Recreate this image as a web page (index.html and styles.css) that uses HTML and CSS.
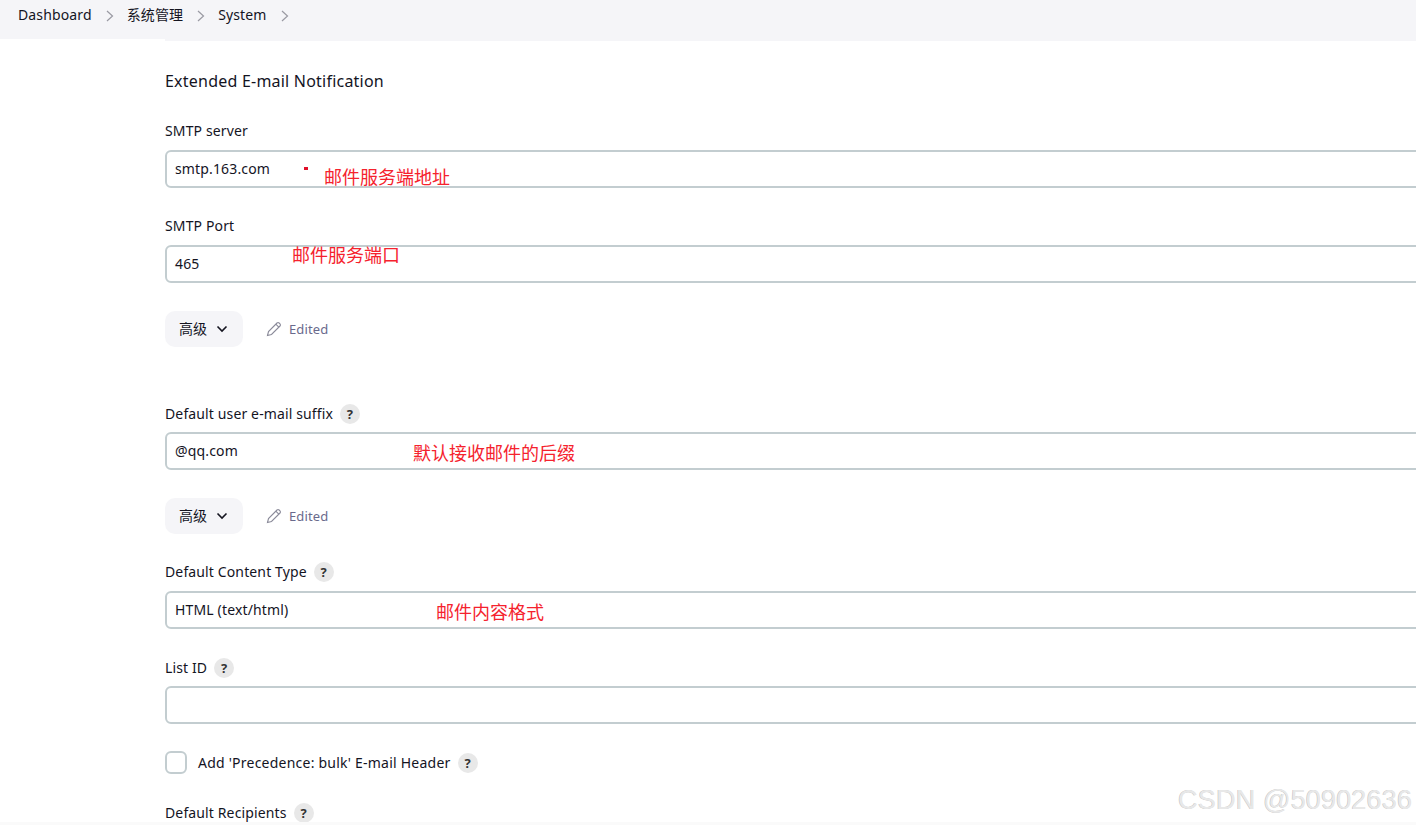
FILE: index.html
```html
<!DOCTYPE html>
<html lang="zh">
<head>
<meta charset="utf-8">
<title>System</title>
<link rel="stylesheet" href="styles.css">
</head>
<body>
<nav class="crumbs">
  <span class="crumb">Dashboard</span>
  <svg class="sep" viewBox="0 0 10 14"><path d="M2 2l5.500 5L2 12"/></svg>
  <span class="crumb">系统管理</span>
  <svg class="sep" viewBox="0 0 10 14"><path d="M2 2l5.500 5L2 12"/></svg>
  <span class="crumb">System</span>
  <svg class="sep" viewBox="0 0 10 14"><path d="M2 2l5.500 5L2 12"/></svg>
</nav>
<main class="form">
  <h2 class="title">Extended E-mail Notification</h2>

  <div class="label gap-title">SMTP server</div>
  <div class="input">smtp.163.com</div>

  <div class="label gap-28">SMTP Port</div>
  <div class="input">465</div>

  <div class="adv">
    <button class="btn"><span class="btn-text">高级</span><svg class="chev" viewBox="0 0 12 8"><path d="M1.500 1.500L6 6l4.500-4.500"/></svg></button>
    <span class="edited"><svg class="pencil" viewBox="0 0 16 16"><path d="M1.500 14.500l1-4L11 2a1.500 1.500 0 0 1 2.100 0l.9.9a1.500 1.500 0 0 1 0 2.100l-8.500 8.500zM9.800 3.200l3 3"/></svg>Edited</span>
  </div>

  <div class="label gap-57 tight">Default user e-mail suffix<span class="help">?</span></div>
  <div class="input">@qq.com</div>

  <div class="adv">
    <button class="btn"><span class="btn-text">高级</span><svg class="chev" viewBox="0 0 12 8"><path d="M1.500 1.500L6 6l4.500-4.500"/></svg></button>
    <span class="edited"><svg class="pencil" viewBox="0 0 16 16"><path d="M1.500 14.500l1-4L11 2a1.500 1.500 0 0 1 2.100 0l.9.9a1.500 1.500 0 0 1 0 2.100l-8.500 8.500zM9.800 3.200l3 3"/></svg>Edited</span>
  </div>

  <div class="label gap-28">Default Content Type<span class="help">?</span></div>
  <div class="input">HTML (text/html)</div>

  <div class="label gap-29 tight">List ID<span class="help">?</span></div>
  <div class="input"></div>

  <label class="check-row">
    <span class="box"></span><span class="check-text">Add 'Precedence: bulk' E-mail Header</span><span class="help">?</span>
  </label>

  <div class="label gap-29">Default Recipients<span class="help">?</span></div>
</main>

<span class="note note-1">邮件服务端地址</span>
<span class="dot"></span>
<span class="note note-2">邮件服务端口</span>
<span class="note note-3">默认接收邮件的后缀</span>
<span class="note note-4">邮件内容格式</span>
<span class="mark">CSDN @50902636</span>
</body>
</html>
```
FILE: styles.css
```css
* { box-sizing: border-box; }
html, body { margin: 0; height: 825px; overflow: hidden; background: #fff; }
body {
  position: relative;
  font-family: "Noto Sans", "Noto Sans CJK SC", sans-serif;
  font-size: 14px;
  letter-spacing: .13px;
  color: #14141f;
}
body::after {
  content: "";
  position: absolute;
  left: 0;
  right: 0;
  bottom: 0;
  height: 3px;
  background: #fafafa;
}
.crumbs {
  position: relative;
  height: 41px;
  background: #f5f5f8;
  display: flex;
  align-items: flex-start;
  padding: 5px 0 0 18px;
}
.crumbs::after {
  content: "";
  position: absolute;
  left: 0;
  bottom: 0;
  width: 165px;
  height: 2px;
  background: #fff;
}
.crumb { line-height: 20px; }
.sep { width: 10px; height: 14px; margin: 4px 12px 0 13px; fill: none; stroke: #9a9aa3; stroke-width: 1.200; }
.form { padding: 0 0 0 165px; width: 1500px; }
.title { margin: 0; padding-top: 30px; font-size: 16px; font-weight: 400; line-height: 20px; letter-spacing: .22px; }
.label { display: flex; align-items: center; line-height: 20px; height: 20px; margin-bottom: 9px; }
.tight { margin-bottom: 8px; }
.gap-title { margin-top: 30px; }
.gap-28 { margin-top: 28px; }
.gap-29 { margin-top: 29px; }
.gap-57 { margin-top: 57px; }
.input {
  height: 38px;
  border: 2px solid #c3cdd0;
  border-radius: 6px;
  padding: 0 8px;
  line-height: 33px;
  letter-spacing: .15px;
  background: #fff;
}
.adv { display: flex; align-items: center; margin-top: 28px; height: 36px; }
.btn {
  display: flex;
  align-items: center;
  height: 36px;
  width: 78px;
  padding: 0 0 0 14px;
  border: 0;
  border-radius: 10px;
  background: #f5f5f8;
  color: inherit;
  font: inherit;
}
.btn-text { margin-top: -2px; }
.chev { width: 12px; height: 8px; margin-left: 9px; fill: none; stroke: #14141f; stroke-width: 1.600; }
.edited { display: flex; align-items: center; margin-left: 23px; color: #6a6a8c; font-size: 13px; }
.pencil { width: 16px; height: 16px; margin-right: 7px; fill: none; stroke: #8a8a99; stroke-width: 1.100; }
.help {
  width: 20px;
  height: 20px;
  margin-left: 7px;
  border-radius: 50%;
  background: #e8e8e8;
  color: #333;
  font-size: 13px;
  font-weight: 700;
  line-height: 20px;
  text-align: center;
}
.check-row { display: flex; align-items: center; margin-top: 27px; height: 23px; }
.check-text { letter-spacing: .23px; }
.box { width: 22px; height: 23px; margin-right: 11px; border: 2px solid #c3cdd0; border-radius: 6px; }
.note { position: absolute; color: #f5222d; font-size: 18px; line-height: 24px; letter-spacing: 0; white-space: nowrap; }
.note-1 { left: 324px; top: 165px; }
.note-2 { left: 292px; top: 243px; }
.note-3 { left: 413px; top: 441px; }
.note-4 { left: 436px; top: 600px; }
.dot { position: absolute; left: 304px; top: 167px; width: 4px; height: 3px; background: #e0102a; }
.mark {
  position: absolute;
  left: 1178px;
  top: 783px;
  font-family: "Liberation Sans", sans-serif;
  font-size: 27.300px;
  line-height: 34px;
  letter-spacing: 0;
  white-space: nowrap;
  color: #e8e8e8;
  text-shadow: -.5px -.5px .5px #bcbcbc, .5px .5px .5px #fff;
}
```
